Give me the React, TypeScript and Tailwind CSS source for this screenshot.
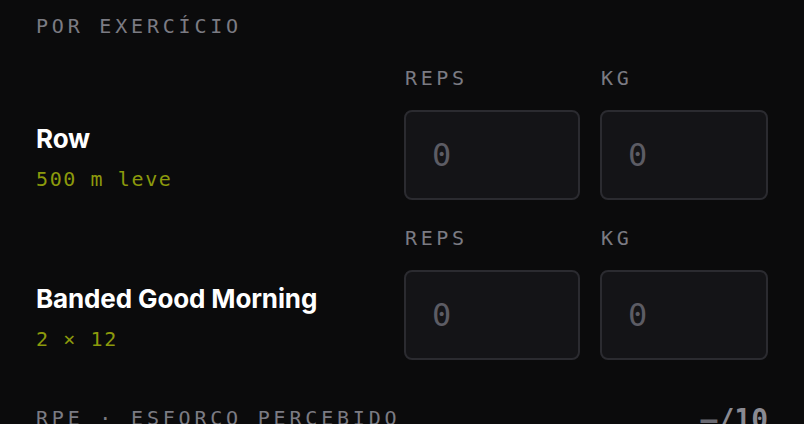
import React from "react";

const mono = { fontFamily: '"DejaVu Sans Mono", "Liberation Mono", monospace' };
const sans = { fontFamily: 'Inter, "Noto Sans", sans-serif' };

function Field({ label, width }: { label: string; width: string }) {
  return (
    <div className="flex flex-col">
      <div
        className="text-[20px] leading-[24px] tracking-[0.18em] text-[#7b7b83] pl-[1px]"
        style={mono}
      >
        {label}
      </div>
      <div
        className={`${width} mt-[20px] h-[90px] rounded-[8px] border-2 border-[#2b2b30] bg-[#141417] flex items-center pl-[26px] text-[32px] text-[#5c5c64]`}
        style={mono}
      >
        0
      </div>
    </div>
  );
}

function Row({ title, sub }: { title: string; sub: string }) {
  return (
    <div className="flex items-end">
      <div className="flex-1 h-[90px] flex flex-col justify-center pt-[6px]">
        <div className="text-[26px] leading-[30px] font-bold text-white tracking-[-0.005em]" style={sans}>
          {title}
        </div>
        <div className="mt-[12px] text-[20px] leading-[26px] tracking-[0.08em] text-[#8c9a0c]" style={mono}>
          {sub}
        </div>
      </div>
      <div className="flex gap-[20px]">
        <Field label="REPS" width="w-[176px]" />
        <Field label="KG" width="w-[168px]" />
      </div>
    </div>
  );
}

export default function App() {
  return (
    <div className="w-[804px] h-[424px] overflow-hidden bg-[#0b0b0c] pl-[36px] pr-[36px] pt-[12px]">
      <div className="text-[20px] leading-[28px] tracking-[0.19em] text-[#7b7b83]" style={mono}>
        POR EXERCÍCIO
      </div>
      <div className="mt-[26px]">
        <Row title="Row" sub="500 m leve" />
      </div>
      <div className="mt-[26px]">
        <Row title="Banded Good Morning" sub="2 × 12" />
      </div>
      <div className="mt-[44px] flex items-start justify-between">
        <div className="text-[20px] leading-[28px] tracking-[0.19em] text-[#7b7b83]" style={mono}>
          RPE · ESFORÇO PERCEBIDO
        </div>
        <div className="text-[28px] leading-[32px] font-bold text-[#8a8a92]" style={mono}>
          <span className="text-[#6a6a72]">—</span>/10
        </div>
      </div>
    </div>
  );
}
